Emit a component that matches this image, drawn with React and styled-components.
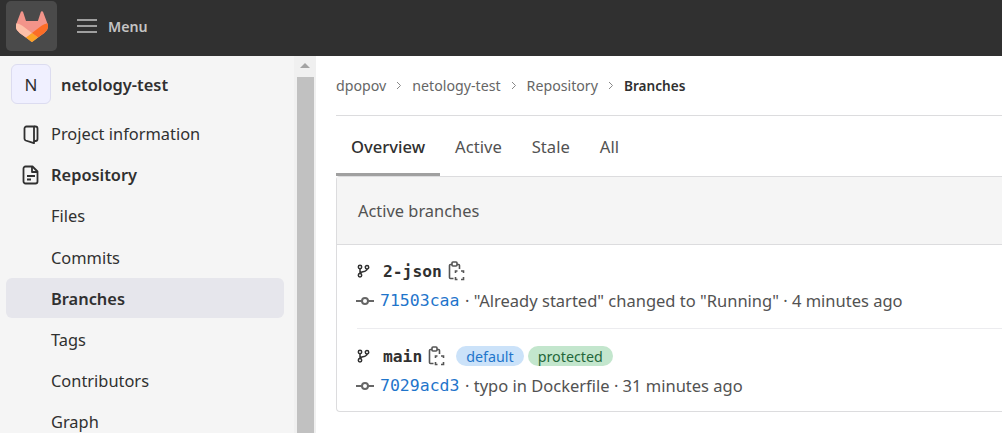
import { Fragment } from 'react'
import styled, { createGlobalStyle } from 'styled-components'

const GlobalStyle = createGlobalStyle`
  html, body { margin: 0; height: 100%; overflow: hidden; background: #fff; }
  body { font-family: "Noto Sans", "Open Sans", sans-serif; color: #303030; }
  #root { height: 100%; }
`

const Page = styled.div`
  display: flex;
  flex-direction: column;
  height: 100vh;
  overflow: hidden;
`

const TopBar = styled.header`
  display: flex;
  align-items: flex-start;
  flex: 0 0 56px;
  padding: 1px 0 0 6px;
  box-sizing: border-box;
  background: #303030;
`

const LogoButton = styled.div`
  display: grid;
  place-items: center;
  width: 51px;
  height: 50px;
  border-radius: 5px;
  background: #4a4a4a;
`

const MenuButton = styled.div`
  display: flex;
  align-items: center;
  gap: 11px;
  height: 50px;
  margin-left: 20px;
  color: #c4c4c4;
  font-size: 14.2px;
  font-weight: 600;
`

const Body = styled.div`
  display: flex;
  flex: 1;
  min-height: 0;
`

const Sidebar = styled.aside`
  display: flex;
  flex: 0 0 316px;
  background: #f5f5f5;
`

const SideContent = styled.nav`
  flex: 1;
  min-width: 0;
  padding: 8px 10px 0 6px;
`

const ProjectRow = styled.div`
  display: flex;
  align-items: center;
  gap: 10px;
  height: 40px;
  padding-left: 5px;
  margin-bottom: 9.5px;
  font-size: 16.4px;
  font-weight: 600;
`

const Avatar = styled.div`
  display: grid;
  place-items: center;
  width: 38px;
  height: 38px;
  border: 1px solid #dcdcf0;
  border-radius: 6px;
  background: #f0f0ff;
  font-size: 17px;
  font-weight: 400;
`

const NavItem = styled.div`
  display: flex;
  align-items: center;
  gap: 11px;
  height: 40px;
  margin-bottom: 1.2px;
  padding-left: ${p => (p.$sub ? '45px' : '16px')};
  border-radius: 6px;
  background: ${p => (p.$active ? '#e6e6ec' : 'transparent')};
  font-size: 16.4px;
  font-weight: ${p => (p.$bold ? 600 : 400)};
`

const ScrollTrack = styled.div`
  display: flex;
  flex-direction: column;
  align-items: center;
  flex: 0 0 22px;
  background: #f0f0f0;
`

const ScrollArrow = styled.div`
  margin-top: 7px;
  border-left: 5px solid transparent;
  border-right: 5px solid transparent;
  border-bottom: 5px solid #a3a3a3;
`

const ScrollThumb = styled.div`
  flex: 1;
  width: 17px;
  margin-top: 9px;
  background: #c1c1c1;
`

const Main = styled.main`
  flex: 1;
  min-width: 0;
  padding-left: 20px;
`

const Breadcrumbs = styled.div`
  display: flex;
  align-items: center;
  gap: 10px;
  height: 59px;
  border-bottom: 1px solid #dcdcde;
  color: #666;
  font-size: 14.2px;
`

const Current = styled.span`
  color: #303030;
  font-size: 13.6px;
  font-weight: 600;
`

const Tabs = styled.div`
  display: flex;
  height: 60px;
`

const Tab = styled.div`
  display: flex;
  align-items: center;
  padding: 0 15px;
  box-shadow: ${p => (p.$active ? 'inset 0 -3px 0 #a0a0a0' : 'none')};
  color: ${p => (p.$active ? '#303030' : '#525252')};
  font-size: 16.6px;
  font-weight: ${p => (p.$active ? 500 : 400)};
`

const Card = styled.section`
  width: 800px;
  border: 1px solid #dcdcde;
  border-right: 0;
  border-radius: 4px 0 0 4px;
`

const CardHeader = styled.div`
  display: flex;
  align-items: center;
  height: 67px;
  padding-left: 21px;
  border-bottom: 1px solid #dcdcde;
  background: #f5f5f5;
  color: #525252;
  font-size: 16.4px;
`

const BranchRow = styled.div`
  margin-left: 20px;
  padding: ${p => (p.$last ? '12px 0 11px' : '11px 0 13px')};
  border-bottom: ${p => (p.$last ? '0' : '1px solid #ececef')};
`

const BranchLine = styled.div`
  display: flex;
  align-items: center;
  height: 30px;
`

const BranchName = styled.span`
  margin: 0 6px 0 13px;
  color: #303030;
  font-family: "DejaVu Sans Mono", monospace;
  font-size: 16.3px;
  font-weight: 700;
`

const Badge = styled.span`
  display: inline-flex;
  align-items: center;
  height: 20px;
  padding: 0 10px;
  margin-left: ${p => (p.$green ? '4px' : '11px')};
  border-radius: 10px;
  background: ${p => (p.$green ? '#c3e6cd' : '#cbe2f9')};
  color: ${p => (p.$green ? '#24663b' : '#1f75cb')};
  font-size: 14.3px;
`

const CommitLine = styled.div`
  display: flex;
  align-items: center;
  height: 29px;
  margin-left: -1px;
  color: #525252;
  font-size: 16.5px;
  white-space: pre;
`

const Sha = styled.span`
  margin: 0 5.5px 0 6px;
  color: #1f75cb;
  font-family: "DejaVu Sans Mono", monospace;
  font-size: 16.5px;
`

const Logo = () => (
  <svg width="32" height="31" viewBox="0 0 25 24">
    <path fill="#f2948a" d="m24.507 9.5-.034-.09L21.082.562a.896.896 0 0 0-1.694.091l-2.29 7.01H7.825L5.535.653a.898.898 0 0 0-1.694-.09L.451 9.411.416 9.5a6.297 6.297 0 0 0 2.09 7.278l.012.01.03.022 5.16 3.867 2.56 1.935 1.554 1.176a1.051 1.051 0 0 0 1.268 0l1.555-1.176 2.56-1.935 5.197-3.89.014-.01A6.297 6.297 0 0 0 24.507 9.5Z" />
    <path fill="#fc6d26" d="m24.507 9.5-.034-.09a11.44 11.44 0 0 0-4.56 2.051l-7.447 5.632 4.742 3.584 5.197-3.89.014-.01A6.297 6.297 0 0 0 24.507 9.5Z" />
    <path fill="#fca326" d="m7.707 20.677 2.56 1.935 1.555 1.176a1.051 1.051 0 0 0 1.268 0l1.555-1.176 2.56-1.935-4.743-3.584-4.755 3.584Z" />
    <path fill="#fdc0a8" d="M5.01 11.461a11.43 11.43 0 0 0-4.56-2.05L.416 9.5a6.297 6.297 0 0 0 2.09 7.278l.012.01.03.022 5.16 3.867 4.745-3.584-7.444-5.632Z" />
  </svg>
)

const Hamburger = () => (
  <svg width="20" height="14" viewBox="0 0 20 14" stroke="#c4c4c4" strokeWidth="1.7">
    <path d="M0 1h20M0 7h20M0 13h20" />
  </svg>
)

const ProjectIcon = () => (
  <svg width="18" height="20" viewBox="0 0 18 20" fill="none" stroke="#303030" strokeWidth="1.8" strokeLinejoin="round">
    <path d="M12 2.500H4.500a2 2 0 0 0-2 2v10.200a2 2 0 0 0 1.200 1.800L12 19.200z" />
    <path d="M12 2.500h1.500a2 2 0 0 1 2 2v10.500a2 2 0 0 1-2 2H12" />
  </svg>
)

const DocIcon = () => (
  <svg width="18" height="20" viewBox="0 0 18 20" fill="none" stroke="#303030" strokeWidth="1.8" strokeLinejoin="round">
    <path d="M3.500 1.500h7l5 5v10a2 2 0 0 1-2 2h-10a2 2 0 0 1-2-2v-13a2 2 0 0 1 2-2z" />
    <path d="M10 1.500v5.500h5.500M5 11h8M5 14.500h4" />
  </svg>
)

const BranchIcon = () => (
  <svg width="13" height="14" viewBox="0 0 13 14" fill="none" stroke="#303030" strokeWidth="1.500">
    <circle cx="3" cy="3" r="1.700" />
    <circle cx="3" cy="11.300" r="1.700" />
    <circle cx="10" cy="3.200" r="1.700" />
    <path d="M3 4.700v4.900M10 4.900c0 2.600-3.600 2.400-7 3.600" />
  </svg>
)

const CommitIcon = () => (
  <svg width="18" height="10" viewBox="0 0 18 10" fill="none" stroke="#666" strokeWidth="2">
    <circle cx="9" cy="5" r="3" />
    <path d="M0 5h6M12 5h6" />
  </svg>
)

const CopyIcon = () => (
  <svg width="17" height="20" viewBox="0 0 17 20" fill="none" stroke="#555" strokeWidth="1.600">
    <path d="M4 3.500H2.500a1 1 0 0 0-1 1v12a1 1 0 0 0 1 1H5.500" />
    <path d="M9 3.500h1.500a1 1 0 0 1 1 1v3.500" />
    <rect x="4" y="1" width="5" height="4" rx="1" />
    <path d="M7.500 12v-2h2M13 10h2.500v2M15.500 16v2.500H13M9.500 18.500h-2V16" />
  </svg>
)

const Chevron = () => (
  <svg width="6" height="9" viewBox="0 0 6 9" fill="none" stroke="#888" strokeWidth="1">
    <path d="M1 1l3.500 3.500L1 8" />
  </svg>
)

const crumbs = ['dpopov', 'netology-test', 'Repository']
const subItems = ['Files', 'Commits', 'Branches', 'Tags', 'Contributors', 'Graph']
const tabs = ['Overview', 'Active', 'Stale', 'All']

export default function App() {
  return (
    <Page>
      <GlobalStyle />
      <TopBar>
        <LogoButton><Logo /></LogoButton>
        <MenuButton><Hamburger />Menu</MenuButton>
      </TopBar>
      <Body>
        <Sidebar>
          <SideContent>
            <ProjectRow><Avatar>N</Avatar>netology-test</ProjectRow>
            <NavItem><ProjectIcon />Project information</NavItem>
            <NavItem $bold><DocIcon />Repository</NavItem>
            {subItems.map(item => (
              <NavItem key={item} $sub $active={item === 'Branches'} $bold={item === 'Branches'}>{item}</NavItem>
            ))}
          </SideContent>
          <ScrollTrack>
            <ScrollArrow />
            <ScrollThumb />
          </ScrollTrack>
        </Sidebar>
        <Main>
          <Breadcrumbs>
            {crumbs.map(c => (
              <Fragment key={c}>
                <span>{c}</span>
                <Chevron />
              </Fragment>
            ))}
            <Current>Branches</Current>
          </Breadcrumbs>
          <Tabs>
            {tabs.map((t, i) => <Tab key={t} $active={i === 0}>{t}</Tab>)}
          </Tabs>
          <Card>
            <CardHeader>Active branches</CardHeader>
            <BranchRow>
              <BranchLine><BranchIcon /><BranchName>2-json</BranchName><CopyIcon /></BranchLine>
              <CommitLine><CommitIcon /><Sha>71503caa</Sha>· "Already started" changed to "Running" · 4 minutes ago</CommitLine>
            </BranchRow>
            <BranchRow $last>
              <BranchLine>
                <BranchIcon /><BranchName>main</BranchName><CopyIcon />
                <Badge>default</Badge><Badge $green>protected</Badge>
              </BranchLine>
              <CommitLine><CommitIcon /><Sha>7029acd3</Sha>· typo in Dockerfile · 31 minutes ago</CommitLine>
            </BranchRow>
          </Card>
        </Main>
      </Body>
    </Page>
  )
}
